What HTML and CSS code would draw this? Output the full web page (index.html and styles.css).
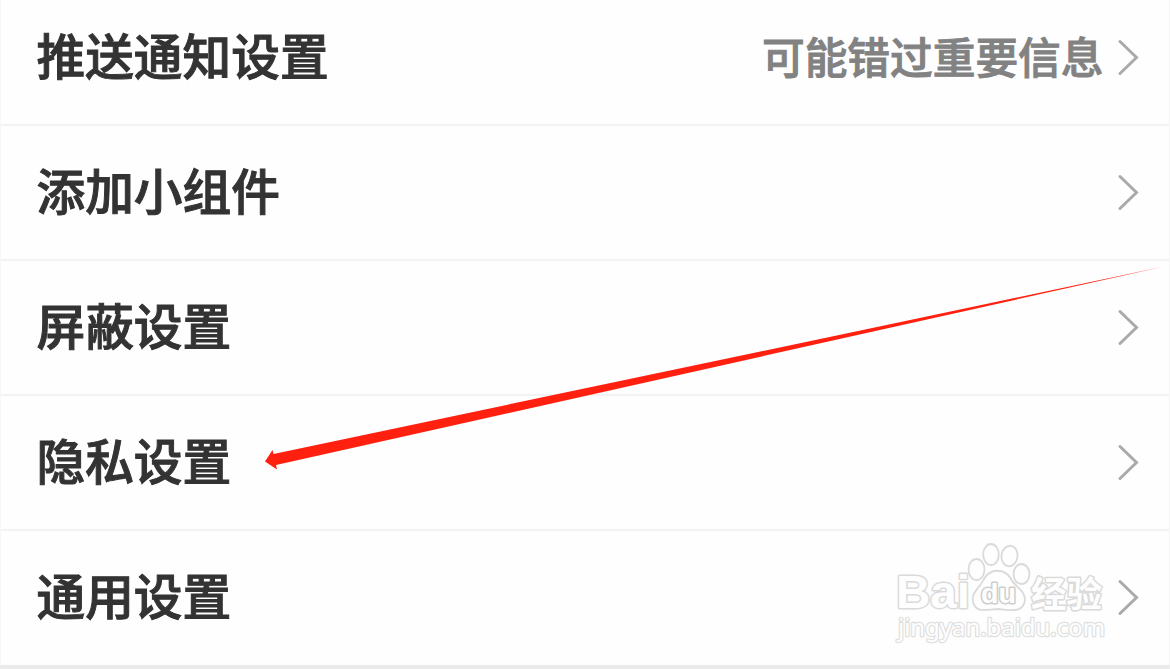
FILE: index.html
```html
<!DOCTYPE html>
<html lang="zh-CN">
<head>
<meta charset="utf-8">
<title>设置</title>
<link rel="stylesheet" href="styles.css">
</head>
<body>
<svg class="defs" width="0" height="0"><symbol id="chevron" viewBox="0 0 24 40"><path d="M3 3.500 19.500 19.500 3 35.500" fill="none" stroke="#aaa" stroke-width="3" stroke-linecap="round" stroke-linejoin="miter"/></symbol></svg>
<main class="settings">
  <div class="row"><span class="label">推送通知设置</span><span class="hint">可能错过重要信息</span><svg class="chevron"><use href="#chevron"/></svg></div>
  <div class="row"><span class="label">添加小组件</span><svg class="chevron"><use href="#chevron"/></svg></div>
  <div class="row"><span class="label">屏蔽设置</span><svg class="chevron"><use href="#chevron"/></svg></div>
  <div class="row"><span class="label">隐私设置</span><svg class="chevron"><use href="#chevron"/></svg></div>
  <div class="row"><span class="label">通用设置</span><svg class="chevron"><use href="#chevron"/></svg></div>
</main>
<svg class="arrow" viewBox="0 0 1170 669"><path d="M265 461.5 272.5 450 273.5 454 1164 266.5 276 465 277 469.500Z" fill="#ff2010"/></svg>
<svg class="watermark" viewBox="880 530 230 120">
  <g class="outline">
    <ellipse cx="976.500" cy="569.500" rx="8" ry="10.500"/>
    <ellipse cx="991" cy="554.500" rx="7.800" ry="10.500"/>
    <ellipse cx="1009.500" cy="556" rx="8" ry="10.300" transform="rotate(8 1009.500 556)"/>
    <ellipse cx="1021.500" cy="574" rx="8" ry="10"/>
    <text class="brand" x="896" y="608" textLength="74" lengthAdjust="spacingAndGlyphs">Bai</text>
    <path d="M984 579C990 568 1005 568 1011 579C1015 587 1025 590 1025 600C1023 614 1010 610 998 609C988 609 976 614 973 602C971 592 980 588 984 579Z"/>
    <text class="du" x="981" y="603" textLength="35" lengthAdjust="spacingAndGlyphs">du</text>
    <text class="cn" x="1031" y="606.500" textLength="71" lengthAdjust="spacingAndGlyphs">经验</text>
    <text class="url" x="898" y="636" textLength="207" lengthAdjust="spacingAndGlyphs">jingyan.baidu.com</text>
  </g>
</svg>
</body>
</html>
```
FILE: styles.css
```css
* { box-sizing: border-box; }
body { margin: 0; width: 1170px; height: 669px; overflow: hidden; background: #ebebeb; font-family: "Noto Sans CJK SC", sans-serif; position: relative; }
.defs { display: none; }
.settings { height: 665px; background: #fefefe; border: solid #f6f6f6; border-width: 0 1px; }
.row { display: flex; align-items: center; height: 135px; padding: 0 28px 0 35.500px; border-bottom: 2px solid #f3f3f3; }
.row:first-child { height: 126px; padding-bottom: 9px; }
.row:last-child { height: 134px; border-bottom: 0; padding-bottom: 1px; }
.label { color: #333; font-size: 48.700px; font-weight: 500; line-height: 70px; padding-bottom: 7px; -webkit-text-stroke: 1px #333; }
.hint { margin-left: auto; color: #828282; font-size: 42.700px; font-weight: 500; line-height: 62px; padding-bottom: 5px; -webkit-text-stroke: 0.900px #828282; }
.chevron { width: 24px; height: 40px; margin-left: auto; flex: none; }
.hint + .chevron { margin-left: 13.500px; }
.arrow { position: absolute; left: 0; top: 0; width: 1170px; height: 669px; }
.watermark { position: absolute; left: 880px; top: 530px; width: 230px; height: 120px; }
.outline { fill: #fefefe; stroke: #dadada; stroke-width: 1.800px; }
.outline text { paint-order: stroke fill; stroke-width: 3px; stroke-linejoin: round; }
.brand { font: 700 46px "Liberation Sans", sans-serif; }
.outline .du { font: 700 27px "Liberation Sans", sans-serif; stroke: #cecece; }
.outline .cn { font: 700 35px/1 "Noto Sans CJK SC", sans-serif; }
.outline .url { font: 400 23px "Noto Sans", sans-serif; stroke: #e0e0e0; stroke-width: 2.400px; }
```
